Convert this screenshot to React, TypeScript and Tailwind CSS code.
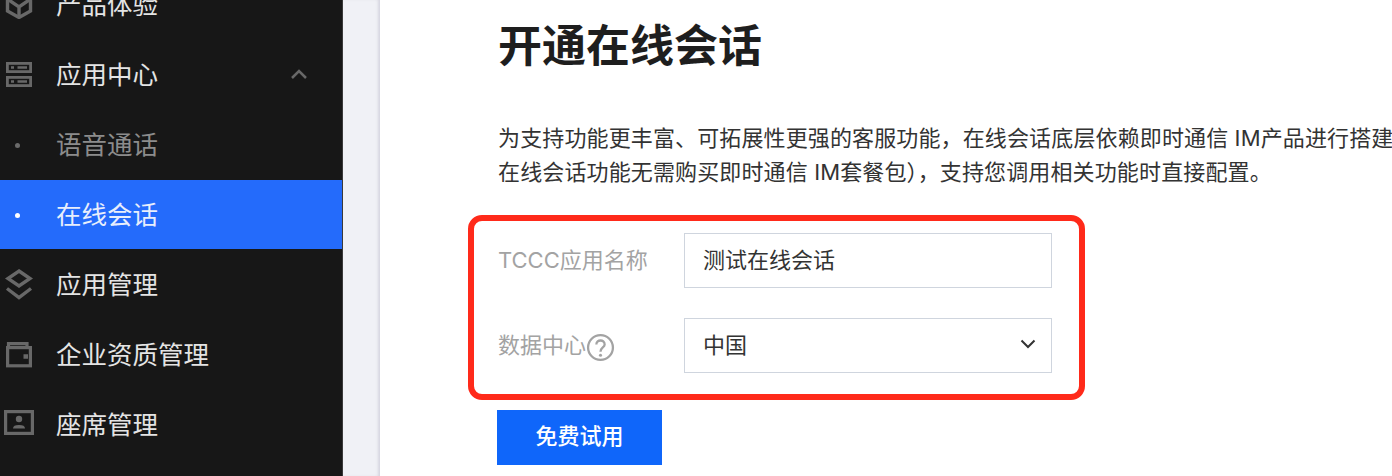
const navFont = "font-['Inter','Noto_Sans_CJK_SC',sans-serif]"
const iconGray = '#686868'

function CubeIcon() {
  return (
    <svg viewBox="0 0 28 28" className="w-[28px] h-[28px]" fill="none" stroke={iconGray} strokeWidth="3.4">
      <path d="M14 1.5 25.5 8v12L14 26.5 2.5 20V8z" />
      <path d="M2.5 8 14 16 25.5 8M14 16v10.5" />
    </svg>
  )
}

function ServerIcon() {
  return (
    <svg viewBox="0 0 28 28" className="w-[28px] h-[28px]" fill="none" stroke={iconGray} strokeWidth="2.8">
      <rect x="2.4" y="2.4" width="23.2" height="8.2" />
      <rect x="2.4" y="16.4" width="23.2" height="8.2" />
      <path d="M6 6.5h3M12.5 6.5H22M6 20.5h3M12.5 20.5H22" strokeWidth="2.4" />
    </svg>
  )
}

function LayersIcon() {
  return (
    <svg viewBox="0 0 28 28" className="w-[28px] h-[28px] overflow-visible" fill="none" stroke={iconGray} strokeWidth="3.4">
      <path d="M14 0 25 7.5 14 15 3 7.5z" />
      <path d="M2 17.5 14 26.5 26 17.5" />
    </svg>
  )
}

function WalletIcon() {
  return (
    <svg viewBox="0 0 28 28" className="w-[28px] h-[28px]" fill="none" stroke={iconGray} strokeWidth="3.2">
      <rect x="2.6" y="6.6" width="22.8" height="18.2" />
      <path d="M3.5 6V2.6h18.5V6" />
      <path d="M18.5 15.5h4.5" strokeWidth="4.5" />
    </svg>
  )
}

function BadgeIcon() {
  return (
    <svg viewBox="0 0 30 28" className="w-[30px] h-[28px] overflow-visible" fill="none" stroke={iconGray} strokeWidth="3.2">
      <rect x="1.6" y="0.6" width="26.8" height="21.8" />
      <circle cx="15" cy="8" r="3.2" fill={iconGray} stroke="none" />
      <path d="M9 17.5c0-2.5 2-3.5 6-3.5s6 1 6 3.5z" fill={iconGray} stroke="none" />
    </svg>
  )
}

function ChevronUp() {
  return (
    <svg viewBox="0 0 16 10" className="w-[16px] h-[10px]" fill="none" stroke={iconGray} strokeWidth="2.5">
      <path d="M1 9 8 2l7 7" />
    </svg>
  )
}

function NavRow({ icon, label, children }: { icon: React.ReactNode; label: string; children?: React.ReactNode }) {
  return (
    <div className="h-[70px] flex items-center text-[25.5px] text-[#e4e4e4]">
      <div className="w-[56px] pl-[5px] flex items-center">{icon}</div>
      <span className="flex-1">{label}</span>
      {children}
    </div>
  )
}

export default function App() {
  return (
    <div className={`w-[1392px] h-[476px] overflow-hidden flex bg-white ${navFont}`}>
      {/* sidebar */}
      <aside className="w-[343px] shrink-0 bg-[#171717] border-r border-[#3a3a3a] -mt-[30px]">
        <NavRow icon={<CubeIcon />} label="产品体验" />
        <NavRow icon={<ServerIcon />} label="应用中心">
          <div className="pr-[35px] pb-[2px]"><ChevronUp /></div>
        </NavRow>
        <div className="h-[70px] flex items-center text-[25.5px] text-[#8c8c8c]">
          <div className="w-[56px] pl-[15px]"><div className="w-[5px] h-[5px] rounded-full bg-[#6b6b6b]" /></div>
          <span>语音通话</span>
        </div>
        <div className="h-[69px] mb-[1px] pt-[1px] flex items-center text-[25.5px] text-[#e8eefc] bg-[#246bfb]">
          <div className="w-[56px] pl-[15px]"><div className="w-[5px] h-[5px] rounded-full bg-white" /></div>
          <span>在线会话</span>
        </div>
        <NavRow icon={<LayersIcon />} label="应用管理" />
        <NavRow icon={<WalletIcon />} label="企业资质管理" />
        <NavRow icon={<div className="-ml-[1px]"><BadgeIcon /></div>} label="座席管理" />
      </aside>

      {/* page gutter */}
      <div className="w-[37px] shrink-0 bg-[#f0f1f6] shadow-[inset_-3px_0_3px_-1px_#d6d6e0]" />

      {/* content */}
      <main className="flex-1 min-w-0 overflow-hidden pl-[118px] text-[#222]">
        <h1 className="text-[44px] leading-[60px] font-bold mt-[16px] text-[#1e1e1e]">开通在线会话</h1>
        <div className="mt-[45px] text-[22px] leading-[34px] tracking-[0.13px] text-[#333] whitespace-nowrap">
          <p>为支持功能更丰富、可拓展性更强的客服功能，在线会话底层依赖即时通信 IM产品进行搭建</p>
          <p>在线会话功能无需购买即时通信 IM套餐包），支持您调用相关功能时直接配置。</p>
        </div>

        {/* form, with the red annotation frame */}
        <div className="w-[617px] h-[185px] -ml-[30px] mt-[26px] border-[6px] border-[#ff2a1a] rounded-[14px] pt-[12px] pl-[24px]">
          <div className="flex items-center h-[55px]">
            <label className="w-[186px] text-[22px] text-[#a3a3a3]">TCCC应用名称</label>
            <div className="w-[368px] h-[55px] border border-[#cfd5de] flex items-center pl-[18px] text-[22px] text-[#333]">测试在线会话</div>
          </div>
          <div className="flex items-center h-[55px] mt-[30px]">
            <label className="w-[186px] text-[22px] text-[#a3a3a3] flex items-center">
              数据中心
              <svg viewBox="0 0 28 28" className="w-[29px] h-[29px] mt-[3px]" fill="none">
                <circle cx="14" cy="14" r="12" stroke="#a3a3a3" strokeWidth="2.2" />
                <path d="M10 11c0-5 8-5 8 0 0 3-4 3-4 7" stroke="#a3a3a3" strokeWidth="2.2" />
                <circle cx="14" cy="21.5" r="1.5" fill="#a3a3a3" />
              </svg>
            </label>
            <div className="w-[368px] h-[55px] border border-[#cfd5de] flex items-center justify-between pl-[18px] pr-[15px] text-[22px] text-[#333]">
              <span>中国</span>
              <svg viewBox="0 0 16 10" className="w-[16px] h-[10px] -mt-[3px]" fill="none" stroke="#333" strokeWidth="2">
                <path d="M1.5 1.5 8 8l6.5-6.5" />
              </svg>
            </div>
          </div>
        </div>

        <button className="mt-[10px] -ml-[1px] w-[165px] h-[55px] pb-[2px] bg-[#0f66fa] text-white text-[22px] font-medium">免费试用</button>
      </main>
    </div>
  )
}
